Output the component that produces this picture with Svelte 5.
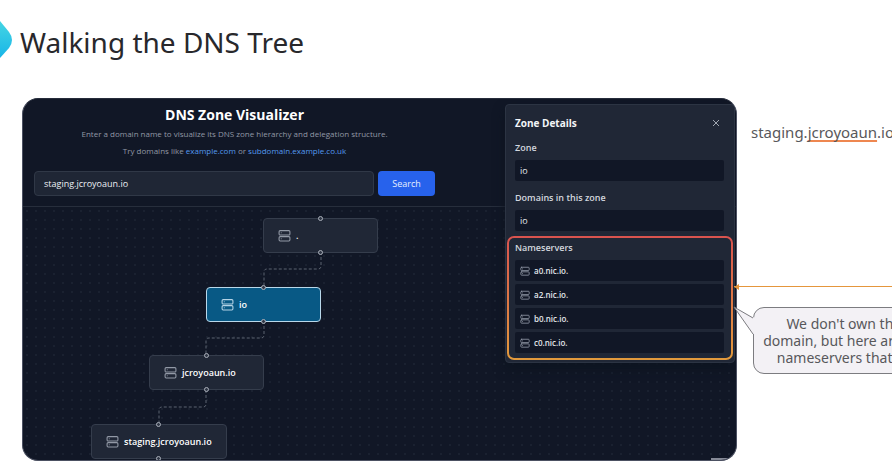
<script>
  const zone = 'io';
  const nameservers = ['a0.nic.io.', 'a2.nic.io.', 'b0.nic.io.', 'c0.nic.io.'];
  const nodes = [
    { name: '.', x: 240, y: 11, w: 115 },
    { name: 'io', x: 183, y: 80, w: 115, active: true },
    { name: 'jcroyoaun.io', x: 126, y: 148, w: 115 },
    { name: 'staging.jcroyoaun.io', x: 68, y: 217, w: 136 }
  ];
  let domain = $state('staging.jcroyoaun.io');
</script>

{#snippet server()}
  <svg class="server" viewBox="0 0 24 24" aria-hidden="true">
    <rect x="2" y="3" width="20" height="8" rx="2" />
    <rect x="2" y="14" width="20" height="8" rx="2" />
    <path d="M6 7h.01M6 18h.01" />
  </svg>
{/snippet}

<div class="slide">
  <header class="top">
    <svg class="mark" viewBox="0 0 14 40" aria-hidden="true">
      <defs>
        <linearGradient id="cyan" x1="0" y1="0" x2="0" y2="1">
          <stop offset="0" stop-color="#45d5e3" />
          <stop offset="1" stop-color="#18b5e8" />
        </linearGradient>
      </defs>
      <path d="M0 1L9 12Q15 20 9 28L0 38Z" fill="url(#cyan)" />
    </svg>
    <h1>Walking the DNS Tree</h1>
  </header>

  <main>
    <section class="app">
      <div class="intro">
        <div class="column">
          <h2>DNS Zone Visualizer</h2>
          <p>Enter a domain name to visualize its DNS zone hierarchy and delegation structure.</p>
          <p>Try domains like <a href="#example">example.com</a> or <a href="#subdomain">subdomain.example.co.uk</a></p>
          <form onsubmit={(e) => e.preventDefault()}>
            <input type="text" aria-label="Domain name" bind:value={domain} />
            <button class="search" type="submit">Search</button>
          </form>
        </div>
      </div>

      <div class="canvas">
        <svg class="edges" aria-hidden="true">
          <path d="M298 45V59Q298 62 295 62H244Q241 62 241 65V80" />
          <path d="M241 114V128Q241 131 238 131H186Q183 131 183 134V148" />
          <path d="M183 183V197Q183 200 180 200H139Q136 200 136 203V217" />
        </svg>
        {#each nodes as node}
          <div class="node" class:active={node.active} style="left: {node.x}px; top: {node.y}px; width: {node.w}px">
            {@render server()}
            <span>{node.name}</span>
            <i class="handle in"></i>
            <i class="handle out"></i>
          </div>
        {/each}
        <div class="scroll"></div>
      </div>

      <aside class="details">
        <div class="bar">
          <h3>Zone Details</h3>
          <button class="close" type="button" aria-label="Close">
            <svg viewBox="0 0 8 8" aria-hidden="true"><path d="M1 1L7 7M7 1L1 7" /></svg>
          </button>
        </div>
        <h4>Zone</h4>
        <div class="value">{zone}</div>
        <h4 class="second">Domains in this zone</h4>
        <div class="value">{zone}</div>
        <div class="marked">
          <h4>Nameservers</h4>
          <ul>
            {#each nameservers as ns}
              <li class="value">{@render server()}{ns}</li>
            {/each}
          </ul>
        </div>
      </aside>
    </section>

    <section class="notes">
      <p class="host">staging.<u>jcroyoaun</u>.io</p>
      <div class="arrow"></div>
      <div class="callout">
        <svg class="tail" viewBox="0 0 22 32" aria-hidden="true">
          <path class="fill" d="M22 12L1 1L20 28L22 28Z" />
          <path d="M20 12L1 1L20 28" />
        </svg>
        We don't own this<br />domain, but here are the<br />nameservers that do
      </div>
    </section>
  </main>
</div>

<style>
  :global(body) {
    margin: 0;
    background: #fff;
  }
  .slide {
    position: relative;
    overflow: hidden;
    padding-bottom: 10px;
    font-family: "Open Sans", "Noto Sans", sans-serif;
  }
  h1, h2, h3, h4, p, ul {
    margin: 0;
    padding: 0;
    font-weight: 400;
  }
  .top {
    padding: 22px 20px 36px;
  }
  .mark {
    position: absolute;
    left: 0;
    top: 20px;
    width: 14px;
    height: 40px;
  }
  h1 {
    font-family: "Noto Sans", sans-serif;
    font-size: 28px;
    line-height: 40px;
    color: #28282c;
  }
  main {
    display: flex;
    align-items: stretch;
    padding-left: 22px;
  }
  .app {
    position: relative;
    flex: 0 0 715px;
    box-sizing: border-box;
    overflow: hidden;
    border: 1px solid #4c5162;
    border-top-color: #262c3b;
    border-radius: 16px;
    background: #111726;
    color: #f3f5f8;
  }
  .intro {
    padding: 7px 11px 10px;
    border-bottom: 1px solid #272e3c;
  }
  .column {
    max-width: 401px;
    text-align: center;
  }
  h2 {
    margin-bottom: 1px;
    font-size: 14px;
    line-height: 18px;
    font-weight: 700;
    color: #fff;
  }
  .column p {
    font-size: 8px;
    line-height: 17px;
    color: #9198a5;
  }
  a, .column a {
    color: #5499ee;
    text-decoration: none;
  }
  form {
    display: flex;
    gap: 4px;
    margin-top: 12px;
  }
  input {
    flex: 1;
    min-width: 0;
    height: 25px;
    box-sizing: border-box;
    padding: 0 9px;
    border: 1px solid #303847;
    border-radius: 4px;
    background: #1f2635;
    color: #eceff4;
    font: 9px "Open Sans", sans-serif;
  }
  .search {
    width: 57px;
    padding: 0;
    border: 0;
    border-radius: 4px;
    background: #2762ec;
    color: #e6eeff;
    font: 9px "Open Sans", sans-serif;
  }
  .canvas {
    position: relative;
    height: 253px;
    background: radial-gradient(circle at 4px 4px, #1a2130 0, #1a2130 1px, transparent 1px) 0 0 / 9px 9px;
  }
  .edges {
    position: absolute;
    inset: 0;
    width: 100%;
    height: 100%;
    fill: none;
    stroke: #5d6471;
    stroke-dasharray: 3 2;
  }
  .node {
    position: absolute;
    display: flex;
    align-items: center;
    gap: 5px;
    box-sizing: border-box;
    height: 35px;
    padding-left: 14px;
    border: 1px solid #353d4c;
    border-radius: 4px;
    background: #202736;
    color: #fff;
    font-size: 9px;
    font-weight: 600;
  }
  .node.active {
    border-color: #b9d8ea;
    background: #085985;
  }
  .server {
    flex: none;
    width: 13px;
    height: 13px;
    fill: none;
    stroke: #9299a6;
    stroke-width: 2;
    stroke-linecap: round;
  }
  .active .server {
    stroke: #b4d3e6;
  }
  .handle {
    position: absolute;
    left: 50%;
    width: 3px;
    height: 3px;
    margin-left: -3px;
    border: 1px solid #aab0ba;
    border-radius: 50%;
    background: #303746;
  }
  .in {
    top: -3px;
  }
  .out {
    bottom: -3px;
  }
  .scroll {
    position: absolute;
    right: 8px;
    bottom: 0;
    width: 17px;
    height: 2px;
    background: #858996;
  }
  .details {
    position: absolute;
    top: 5px;
    right: 1px;
    width: 230px;
    box-sizing: border-box;
    padding: 9px 10px 2px 9px;
    border: 1px solid #2c3443;
    border-radius: 4px;
    background: #202736;
    box-shadow: 0 6px 12px #0d1420;
  }
  .bar {
    display: flex;
    justify-content: space-between;
    align-items: center;
    height: 18px;
    margin-bottom: 9px;
  }
  h3 {
    font-size: 10px;
    font-weight: 700;
  }
  .close {
    display: grid;
    place-items: center;
    width: 16px;
    height: 16px;
    padding: 0;
    border: 0;
    background: none;
  }
  .close svg {
    width: 8px;
    height: 8px;
    stroke: #a0a6b1;
  }
  h4 {
    margin-bottom: 5px;
    font-size: 9px;
    line-height: 14px;
    font-weight: 600;
    color: #d3d7df;
  }
  .second {
    margin-top: 10px;
  }
  .value {
    display: flex;
    align-items: center;
    gap: 4px;
    height: 21px;
    padding: 0 5px;
    border-radius: 2px;
    background: #111726;
    color: #e3e6eb;
    font-size: 9px;
  }
  .marked {
    margin: 5px -9px 0 -8px;
    padding: 3px 7px 5px 6px;
    border: 2px solid transparent;
    border-radius: 7px;
    background:
      linear-gradient(#202736, #202736) padding-box,
      linear-gradient(#d9534f, #e29a3c) border-box;
  }
  ul {
    display: grid;
    gap: 3px;
    list-style: none;
  }
  .value .server {
    width: 10px;
    height: 10px;
  }
  li.value {
    font-size: 8px;
    font-weight: 600;
  }
  .notes {
    position: relative;
    flex: 1;
    min-width: 0;
    padding-top: 24px;
    font-family: "Noto Sans", sans-serif;
    font-size: 14px;
    line-height: 17px;
    color: #58585b;
  }
  .host {
    margin-left: 14px;
    font-size: 15px;
    line-height: 20px;
  }
  u {
    text-decoration-color: #ee8750;
    text-decoration-thickness: 2px;
    text-underline-offset: 2px;
    text-decoration-skip-ink: none;
  }
  .arrow {
    position: absolute;
    left: -3px;
    right: 0;
    top: 188px;
    height: 1px;
    background: #e5963c;
  }
  .arrow::before {
    content: "";
    position: absolute;
    left: 0;
    top: -2px;
    border: solid transparent;
    border-width: 3px 5px 3px 0;
    border-right-color: #e5963c;
  }
  .callout {
    position: absolute;
    left: 16px;
    top: 209px;
    width: 184px;
    height: 67px;
    box-sizing: border-box;
    padding-top: 7px;
    border: 1px solid #7c7c80;
    border-radius: 11px;
    background: #f3f1f5;
    text-align: center;
    white-space: nowrap;
  }
  .tail {
    position: absolute;
    left: -21px;
    top: -2px;
    width: 22px;
    height: 32px;
    fill: none;
    stroke: #7c7c80;
  }
  .tail .fill {
    fill: #f3f1f5;
    stroke: none;
  }
</style>
